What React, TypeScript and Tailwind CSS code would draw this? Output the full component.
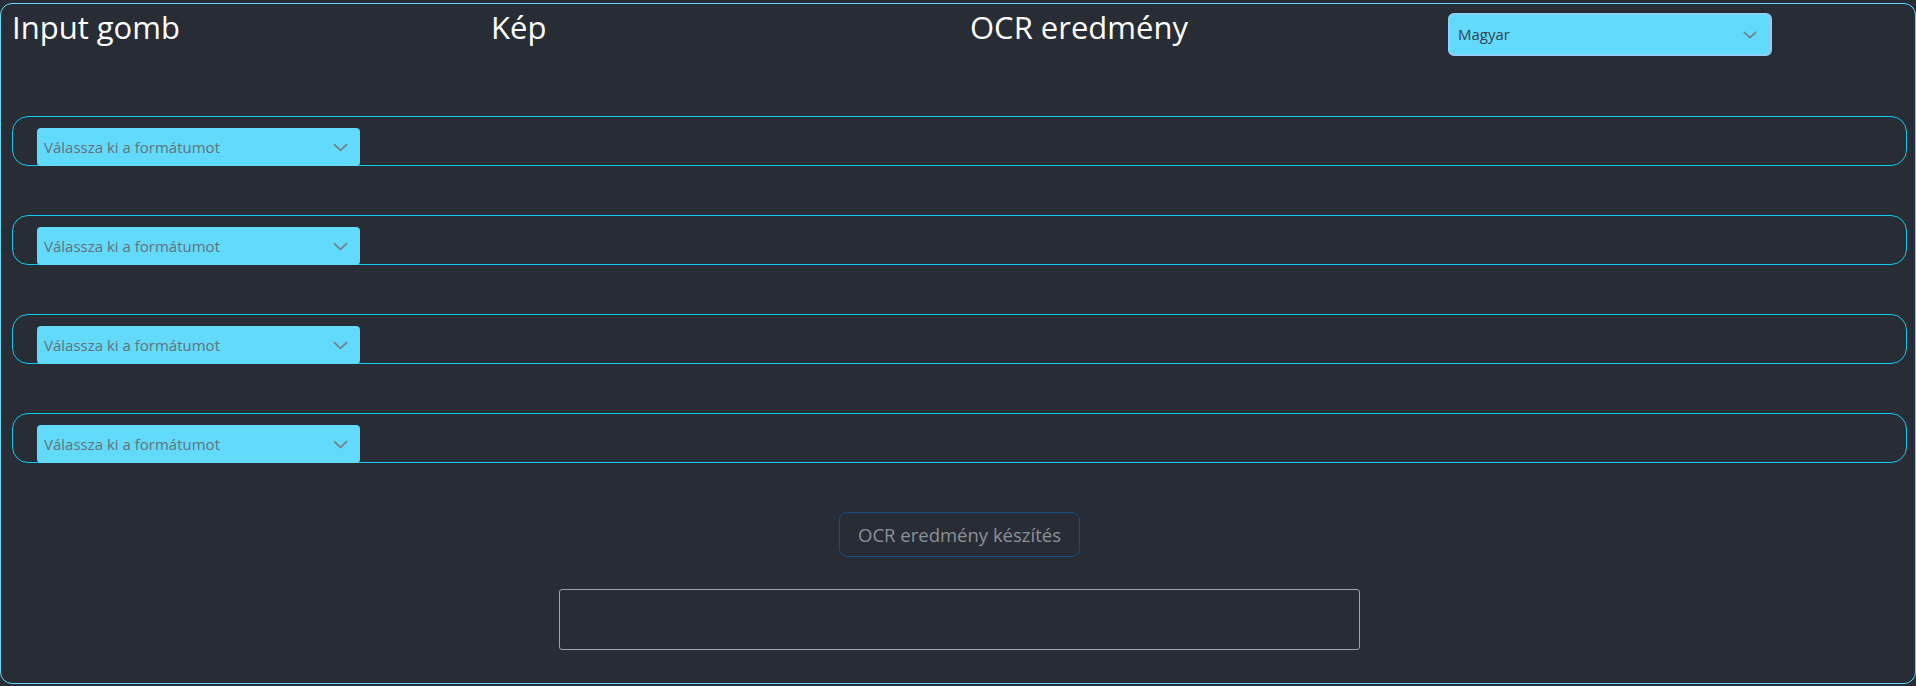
import React from 'react';

const font = { fontFamily: '"Open Sans", "Noto Sans", sans-serif' };

const Chevron: React.FC<{ className?: string }> = ({ className }) => (
  <svg viewBox="0 0 16 9" className={className} fill="none" stroke="#777f85" strokeWidth="1.8" strokeLinecap="round" strokeLinejoin="round">
    <path d="M1.5 1.5 8 7.5 14.5 1.5" />
  </svg>
);

const FormatSelect: React.FC = () => (
  <div className="ml-[24px] mt-[11px] flex h-[38px] w-[323px] items-center justify-between rounded-[4px] bg-[#61dafb] pl-[7px] pr-[12px]">
    <span className="text-[15px] text-[#667179]">Válassza ki a formátumot</span>
    <Chevron className="h-[9px] w-[15px]" />
  </div>
);

export default function App() {
  return (
    <div className="h-[686px] bg-[#282c34] pt-[3px]" style={font}>
      <div className="h-[681px] rounded-[12px] border border-[#61dafb] pl-[11px] pr-[8px]">
        <div className="mt-[3px] grid grid-cols-[479px_479px_478px_324px] items-start">
          <h2 className="text-[31px] leading-[40px] text-white">Input gomb</h2>
          <h2 className="text-[31px] leading-[40px] text-white">Kép</h2>
          <h2 className="text-[31px] leading-[40px] text-white">OCR eredmény</h2>
          <div className="mt-[6px] flex h-[43px] items-center justify-between rounded-[6px] border-2 border-[#8fd0fa] bg-[#61dafb] pl-[8px] pr-[13px]">
            <span className="text-[15px] text-[#34444e]">Magyar</span>
            <Chevron className="h-[8px] w-[14px]" />
          </div>
        </div>

        <div className="mt-[60px] flex flex-col gap-[49px]">
          {[0, 1, 2, 3].map(i => (
            <div key={i} className="h-[50px] rounded-[16px] border border-[#0dcaf0]">
              <FormatSelect />
            </div>
          ))}
        </div>

        <div className="mt-[49px] flex justify-center">
          <button className="h-[45px] w-[241px] rounded-[8px] border border-[#124f85] text-[18.5px] text-[#8b9199]">
            OCR eredmény készítés
          </button>
        </div>

        <div className="mt-[32px] flex justify-center">
          <div className="h-[61px] w-[801px] rounded-[3px] border border-[#a3a3a3]" />
        </div>
      </div>
    </div>
  );
}
